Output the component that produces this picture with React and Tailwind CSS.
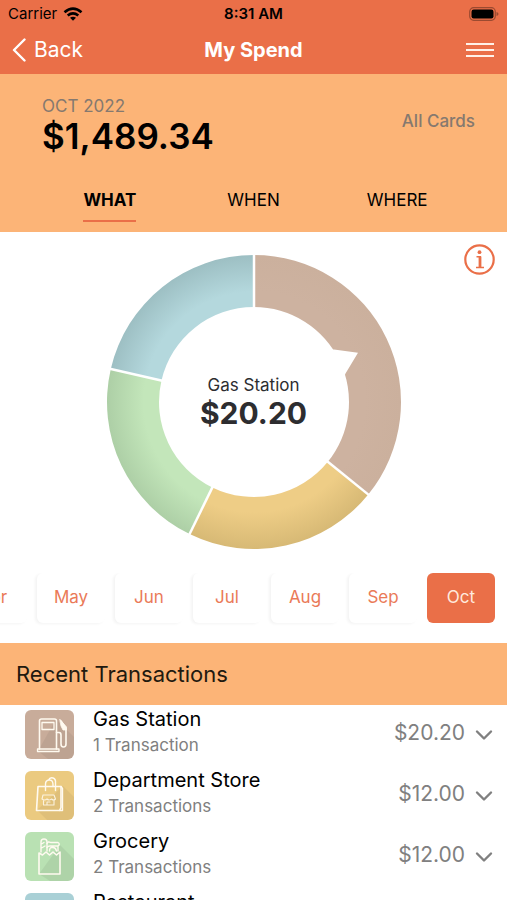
import { useState } from "react";

const months = ["Apr", "May", "Jun", "Jul", "Aug", "Sep", "Oct"];
const tabs = ["WHAT", "WHEN", "WHERE"];

const slices = [
  { id: "gas", from: 0, to: 129, inner: "#cdb2a0", outer: "#cbb09d" },
  { id: "store", from: 129, to: 206, inner: "#eecd86", outer: "#d7b975" },
  { id: "grocery", from: 206, to: 283, inner: "#c3e6ba", outer: "#adcfa6" },
  { id: "restaurant", from: 283, to: 360, inner: "#b4d8dd", outer: "#9dbfc3" },
];

const transactions = [
  { name: "Gas Station", count: "1 Transaction", amount: "$20.20", icon: GasIcon, color: "bg-[#c8ac9a]" },
  { name: "Department Store", count: "2 Transactions", amount: "$12.00", icon: BagIcon, color: "bg-[#ebca80]" },
  { name: "Grocery", count: "2 Transactions", amount: "$12.00", icon: GroceryIcon, color: "bg-[#b9e1b3]" },
  { name: "Restaurant", count: "", amount: "", icon: ForkIcon, color: "bg-[#a9d0d6]" },
];

function point(angle, r) {
  const a = ((angle - 90) * Math.PI) / 180;
  return `${(148 + r * Math.cos(a)).toFixed(2)} ${(148 + r * Math.sin(a)).toFixed(2)}`;
}

function slicePath(from, to) {
  return `M${point(from, 147)}A147 147 0 0 1 ${point(to, 147)}L${point(to, 95)}A95 95 0 0 0 ${point(from, 95)}Z`;
}

function Donut() {
  return (
    <svg viewBox="0 0 296 296" className="w-[296px] h-[296px]" aria-hidden="true">
      <defs>
        {slices.map((s) => (
          <radialGradient key={s.id} id={s.id} gradientUnits="userSpaceOnUse" cx="148" cy="148" r="147">
            <stop offset="0.75" stopColor={s.inner} />
            <stop offset="1" stopColor={s.outer} />
          </radialGradient>
        ))}
      </defs>
      {slices.map((s) => (
        <path key={s.id} d={slicePath(s.from, s.to)} fill={`url(#${s.id})`} />
      ))}
      {slices.map((s) => (
        <path key={s.id} d={`M${point(s.from, 93)}L${point(s.from, 148)}`} stroke="#fff" strokeWidth="2.5" />
      ))}
      <path d="M225 96L228 95.5L252 98.800L239.500 119.500L236 128Z" fill="#fff" />
    </svg>
  );
}

function IconBase({ children }) {
  return (
    <svg viewBox="0 0 49 49" className="w-full h-full" fill="none" stroke="#fffaf0" strokeWidth="1.6" strokeLinejoin="round" strokeLinecap="round" aria-hidden="true">
      {children}
    </svg>
  );
}

function GasIcon() {
  return (
    <IconBase>
      <path d="M31 9L49 27V49H23L13 41Z" fill="#000" fillOpacity="0.05" stroke="none" />
      <path d="M14.500 39V11Q14.500 9 16.500 9H29.500Q31.500 9 31.500 11V39" />
      <path d="M17 12.500H29V19.500H17ZM12.500 39H34V41.500H12.500Z" strokeWidth="1.3" />
      <path d="M31.500 22.500H34Q36 22.500 36 25V34Q36 37 38.500 37T41 34V19L36 11" />
      <path d="M35 9.500L41.500 17V20H38L36 16Z" fill="#fffaf0" strokeWidth="0.8" />
    </IconBase>
  );
}

function BagIcon() {
  return (
    <IconBase>
      <path d="M38 15L49 26V49H22L12 39Z" fill="#000" fillOpacity="0.05" stroke="none" />
      <path d="M13 15.500H36V36.500L34.500 39.500H11.500Z" />
      <path d="M36 15.500L37.500 17.500V39.500H34.500" strokeWidth="1.4" />
      <path d="M20.500 19.500V13Q20.500 9.500 24 9T28 13V15.500M23.500 9Q25 6 28 7T30.500 12V19.500" strokeWidth="1.4" />
      <path d="M18 24H29L30.500 28Q28.500 30 26.500 28Q24 30 22 28Q19.500 30 17 28ZM18.500 29.500V34H29V29.500M22 34V31H25" strokeWidth="1.1" strokeOpacity="0.85" />
    </IconBase>
  );
}

function GroceryIcon() {
  return (
    <IconBase>
      <path d="M35 13L49 27V49H25L14 42Z" fill="#000" fillOpacity="0.06" stroke="none" />
      <path d="M14 21L17.500 23L21 20L24.500 23L28 20L31.500 23L35 20V42H14Z" />
      <path d="M16 20V10Q16 7 19 7T22 10V19M16.500 12L19 10.500M16.500 16L20 14" strokeWidth="1.4" />
      <path d="M22 11.500Q23 9 25.500 10.500H33Q35.500 12 33 14H25Q23 14 22 15.500M33 14V19M24.500 19Q24.500 15 27.500 15.500Q30.500 15 31.500 19" strokeWidth="1.4" />
    </IconBase>
  );
}

function ForkIcon() {
  return (
    <IconBase>
      <path d="M18 10V18Q18 21 21 21T24 18V10M21 10V40M31 40V10Q27 14 28 25H31" />
    </IconBase>
  );
}

function StatusBar() {
  return (
    <div className="grid grid-cols-3 items-center h-7 px-2 text-black">
      <div className="flex items-center gap-1.5 text-[15px]">
        Carrier
        <svg viewBox="0 0 20 14" className="w-5 h-3.5" fill="none" stroke="#000" strokeWidth="2.6" aria-label="Wi-Fi">
          <path d="M1.500 5.200Q10-2 18.500 5.200M4.700 8.500Q10 4.200 15.300 8.500" />
          <path d="M7 10.800Q10 8.500 13 10.800L10 13.800Z" fill="#000" stroke="none" />
        </svg>
      </div>
      <div className="text-center text-[15px] font-semibold">8:31 AM</div>
      <svg viewBox="0 0 31 14" className="w-[31px] h-3.5 justify-self-end" aria-label="Battery">
        <rect x="1.700" y="0.700" width="25.600" height="12.600" rx="4" fill="none" stroke="#9b4a30" strokeWidth="1.2" />
        <rect x="3.500" y="2.500" width="22" height="9" rx="2.200" fill="#000" />
        <path d="M28.500 5V9Q30.500 8.500 30.500 7T28.500 5Z" fill="#9b4a30" />
      </svg>
    </div>
  );
}

export default function App() {
  const [tab, setTab] = useState("WHAT");
  const [month, setMonth] = useState("Oct");

  return (
    <div className="h-screen flex flex-col overflow-hidden bg-white font-['Inter',sans-serif] text-black">
      <header className="shrink-0 bg-[#ea6f48]">
        <StatusBar />
        <div className="grid grid-cols-3 items-center h-[46px] px-3 pb-0.5 text-white">
          <button className="flex items-center gap-2 text-[21px]">
            <svg viewBox="0 0 14 24" className="w-3.5 h-6" fill="none" stroke="currentColor" strokeWidth="2.4" strokeLinecap="round" strokeLinejoin="round" aria-hidden="true">
              <path d="M12.500 1.500L2 12L12.500 22.500" />
            </svg>
            Back
          </button>
          <h1 className="text-center text-xl font-bold">My Spend</h1>
          <button className="justify-self-end" aria-label="Menu">
            <svg viewBox="0 0 30 16" className="w-[30px] h-4" stroke="#fff1e8" strokeWidth="2" aria-hidden="true">
              <path d="M1 2H29M1 8H29M1 14H29" />
            </svg>
          </button>
        </div>
      </header>

      <section className="shrink-0 h-[158px] flex flex-col justify-between bg-[#fcb477]">
        <div className="flex items-center justify-between pl-[42px] pr-8 pt-5">
          <div>
            <div className="text-[17px] leading-6 text-[#85796f]">OCT 2022</div>
            <div className="text-[35px] leading-9 font-semibold">$1,489.34</div>
          </div>
          <button className="pb-1 text-[17px] font-medium text-[#85796f]">All Cards</button>
        </div>
        <nav className="grid grid-cols-3 px-[38px] pb-2.5">
          {tabs.map((t) => (
            <button
              key={t}
              onClick={() => setTab(t)}
              className={
                "justify-self-center h-[34px] pb-2 text-[17px] border-b-2 " +
                (tab === t ? "font-bold border-[#ea6f48]" : "border-transparent")
              }
            >
              {t}
            </button>
          ))}
        </nav>
      </section>

      <section className="relative shrink-0 flex justify-center pt-[22px] pb-[23px]">
        <Donut />
        <div className="absolute inset-0 flex flex-col items-center justify-center pb-1 text-[#2d2d30]">
          <div className="text-[17px] leading-6">Gas Station</div>
          <div className="text-3xl leading-8 font-bold">$20.20</div>
        </div>
        <button className="absolute top-3 right-3 text-[#ea6f48]" aria-label="Info">
          <svg viewBox="0 0 31 31" className="w-[31px] h-[31px]" fill="none" stroke="currentColor" strokeWidth="2.2" aria-hidden="true">
            <circle cx="15.500" cy="15.500" r="14.200" />
            <circle cx="15.500" cy="8.200" r="1.900" fill="currentColor" stroke="none" />
            <path d="M12.500 12.800H16.200V23M12 23.500H20" strokeWidth="1.600" />
            <path d="M16 12.500V23.500" strokeWidth="2.800" />
          </svg>
        </button>
      </section>

      <div className="shrink-0 flex justify-end gap-2.5 overflow-hidden pr-3 pb-5">
        {months.map((m) => (
          <button
            key={m}
            onClick={() => setMonth(m)}
            className={
              "shrink-0 w-[68px] h-[50px] rounded-md text-[17px] " +
              (month === m ? "bg-[#ea6f48] text-[#ffe9de]" : "bg-white text-[#ea7a58] shadow-[-2px_1px_3px_#f4f4f4]")
            }
          >
            {m}
          </button>
        ))}
      </div>

      <h2 className="shrink-0 flex items-center h-[62px] px-4 bg-[#fcb477] text-[22px] text-[#21190f]">
        Recent Transactions
      </h2>

      <ul className="flex-1 min-h-0 overflow-hidden">
        {transactions.map((t) => (
          <li key={t.name} className="flex items-start h-[61px] pl-[25px] pr-3.5">
            <div className={"shrink-0 w-[49px] h-[49px] mt-[5px] rounded-md overflow-hidden " + t.color}>
              <t.icon />
            </div>
            <div className="flex-1 pl-[19px]">
              <div className="text-xl leading-7">{t.name}</div>
              <div className="text-[17px] leading-6 text-[#808080]">{t.count}</div>
            </div>
            <div className="text-[21px] leading-[56px] text-[#808080]">{t.amount}</div>
            <button className="ml-2.5 mt-6 text-[#808080]" aria-label={"Show " + t.name}>
              <svg viewBox="0 0 18 12" className="w-[18px] h-3" fill="none" stroke="currentColor" strokeWidth="2.400" strokeLinecap="round" strokeLinejoin="round" aria-hidden="true">
                <path d="M2 2.500L9 9.500L16 2.500" />
              </svg>
            </button>
          </li>
        ))}
      </ul>
    </div>
  );
}
